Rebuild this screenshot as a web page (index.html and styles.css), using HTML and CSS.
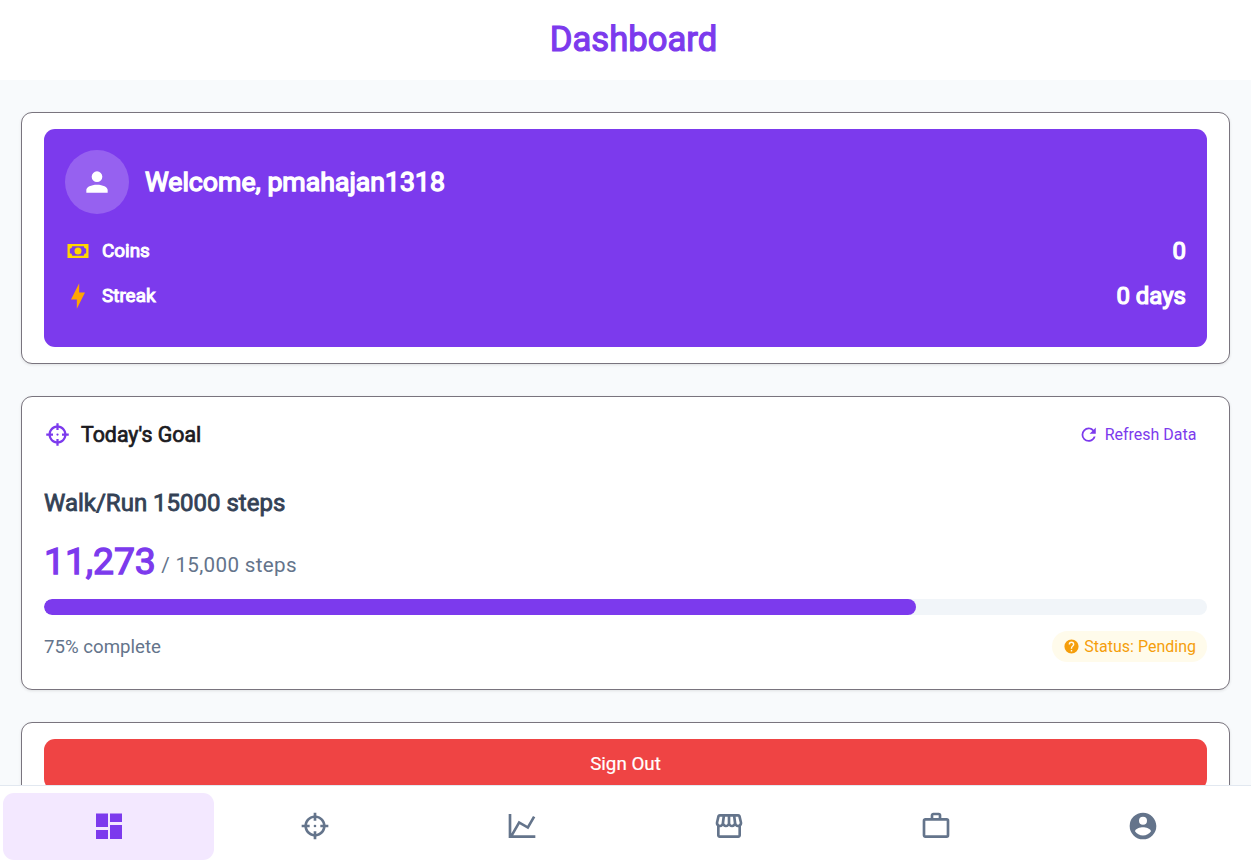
FILE: index.html
```html
<!DOCTYPE html>
<html lang="en">
<head>
<meta charset="utf-8">
<title>Dashboard</title>
<link rel="stylesheet" href="styles.css">
</head>
<body>
<div class="app">
  <header class="topbar"><h1 class="title bold">Dashboard</h1></header>
  <main class="content">
    <section class="card">
      <div class="welcome">
        <div class="user">
          <div class="avatar"><svg width="32" height="32" viewBox="0 0 24 24"><path d="M12,4A4,4 0 0,1 16,8A4,4 0 0,1 12,12A4,4 0 0,1 8,8A4,4 0 0,1 12,4M12,14C16.42,14 20,15.79 20,18V20H4V18C4,15.79 7.58,14 12,14Z"/></svg></div>
          <h2 class="greeting heavy">Welcome, pmahajan1318</h2>
        </div>
        <div class="stat">
          <svg class="coin" width="28" height="28" viewBox="0 0 24 24"><path d="M3,6H21V18H3V6M12,9A3,3 0 0,1 15,12A3,3 0 0,1 12,15A3,3 0 0,1 9,12A3,3 0 0,1 12,9M7,8A2,2 0 0,1 5,10V14A2,2 0 0,1 7,16H17A2,2 0 0,1 19,14V10A2,2 0 0,1 17,8H7Z"/></svg>
          <span class="stat-name heavy">Coins</span><span class="stat-value heavy">0</span>
        </div>
        <div class="stat">
          <svg class="bolt" width="28" height="28" viewBox="0 0 24 24"><path d="M11 15H6L13 1V9H18L11 23V15Z"/></svg>
          <span class="stat-name heavy">Streak</span><span class="stat-value heavy">0 days</span>
        </div>
      </div>
    </section>
    <section class="card">
      <div class="goal-head">
        <svg class="goal-icon" width="27" height="27" viewBox="0 0 24 24"><path d="M11,2V4.07C7.38,4.53 4.53,7.38 4.07,11H2V13H4.07C4.53,16.62 7.38,19.47 11,19.93V22H13V19.93C16.62,19.47 19.47,16.62 19.93,13H22V11H19.93C19.47,7.38 16.62,4.53 13,4.07V2M11,6.08V8H13V6.09C15.5,6.5 17.5,8.5 17.92,11H16V13H17.91C17.5,15.5 15.5,17.5 13,17.92V16H11V17.91C8.5,17.5 6.5,15.5 6.08,13H8V11H6.09C6.5,8.5 8.5,6.5 11,6.08M12,11A1,1 0 0,0 11,12A1,1 0 0,0 12,13A1,1 0 0,0 13,12A1,1 0 0,0 12,11Z"/></svg>
        <h2 class="goal-title bold">Today's Goal</h2>
        <button class="refresh"><svg width="21.33" height="21.33" viewBox="0 0 24 24"><path d="M17.65,6.35C16.2,4.9 14.21,4 12,4A8,8 0 0,0 4,12A8,8 0 0,0 12,20C15.73,20 18.84,17.45 19.73,14H17.65C16.83,16.33 14.61,18 12,18A6,6 0 0,1 6,12A6,6 0 0,1 12,6C13.66,6 15.14,6.69 16.22,7.78L13,11H20V4L17.65,6.35Z"/></svg>Refresh Data</button>
      </div>
      <h3 class="goal-name bold">Walk/Run 15000 steps</h3>
      <div class="count"><span class="count-now bold">11,273</span><span class="count-goal">/ 15,000 steps</span></div>
      <div class="track"><div class="fill" style="width:75%"></div></div>
      <div class="goal-foot">
        <span class="percent">75% complete</span>
        <span class="status"><svg width="17" height="17" viewBox="0 0 24 24"><path d="M15.07,11.25L14.17,12.17C13.45,12.89 13,13.5 13,15H11V14.5C11,13.39 11.45,12.39 12.17,11.67L13.41,10.41C13.78,10.05 14,9.55 14,9C14,7.89 13.1,7 12,7A2,2 0 0,0 10,9H8A4,4 0 0,1 12,5A4,4 0 0,1 16,9C16,9.88 15.64,10.67 15.07,11.25M13,19H11V17H13M12,2A10,10 0 0,0 2,12A10,10 0 0,0 12,22A10,10 0 0,0 22,12C22,6.47 17.5,2 12,2Z"/></svg>Status: Pending</span>
      </div>
    </section>
    <section class="card"><button class="signout">Sign Out</button></section>
  </main>
  <nav class="tabs">
    <a class="tab active"><svg width="32" height="32" viewBox="0 0 32 32"><path d="M3 3.4H15V17H3ZM17 3.4H29V12H17ZM3 20H15V29H3ZM17 15H29V29H17Z"/></svg></a>
    <a class="tab"><svg width="32" height="32" viewBox="0 0 24 24"><path d="M11,2V4.07C7.38,4.53 4.53,7.38 4.07,11H2V13H4.07C4.53,16.62 7.38,19.47 11,19.93V22H13V19.93C16.62,19.47 19.47,16.62 19.93,13H22V11H19.93C19.47,7.38 16.62,4.53 13,4.07V2M11,6.08V8H13V6.09C15.5,6.5 17.5,8.5 17.92,11H16V13H17.91C17.5,15.5 15.5,17.5 13,17.92V16H11V17.91C8.5,17.5 6.5,15.5 6.08,13H8V11H6.09C6.5,8.5 8.5,6.5 11,6.08M12,11A1,1 0 0,0 11,12A1,1 0 0,0 12,13A1,1 0 0,0 13,12A1,1 0 0,0 12,11Z"/></svg></a>
    <a class="tab"><svg width="32" height="32" viewBox="0 0 24 24"><path d="M16,11.78L20.24,4.45L21.97,5.45L16.74,14.5L10.23,10.75L5.46,19H22V21H2V3H4V17.54L9.5,8L16,11.78Z"/></svg></a>
    <a class="tab"><svg width="32" height="32" viewBox="0 0 24 24"><path d="M5.06 3C4.63 3 4.22 3.14 3.84 3.42S3.24 4.06 3.14 4.5L2.11 8.91C1.86 10 2.06 10.92 2.71 11.73L3 12V19C3 19.5 3.2 20 3.61 20.39S4.5 21 5 21H19C19.5 21 20 20.8 20.39 20.39S21 19.5 21 19V12L21.29 11.73C21.94 10.92 22.14 10 21.89 8.91L20.86 4.5C20.73 4.06 20.5 3.7 20.13 3.42C19.78 3.14 19.38 3 18.94 3M18.89 4.97L19.97 9.38C20.06 9.81 19.97 10.2 19.69 10.55C19.44 10.86 19.13 11 18.75 11C18.44 11 18.17 10.9 17.95 10.66C17.73 10.43 17.61 10.16 17.58 9.84L16.97 5M5.06 5H7.03L6.42 9.84C6.3 10.63 5.91 11 5.25 11C4.84 11 4.53 10.86 4.31 10.55C4.03 10.2 3.94 9.81 4.03 9.38M9.05 5H11V9.7C11 10.05 10.89 10.35 10.64 10.62C10.39 10.88 10.08 11 9.7 11C9.36 11 9.07 10.88 8.84 10.59C8.61 10.3 8.5 10 8.5 9.66V9.5M13 5H14.95L15.5 9.5C15.58 9.92 15.5 10.27 15.21 10.57C14.95 10.87 14.61 11 14.2 11C13.89 11 13.61 10.88 13.36 10.62C13.11 10.35 13 10.05 13 9.7M7.45 12.05C8.08 12.65 8.86 13 9.7 13C10.55 13 11.33 12.65 11.97 12.05C12.67 12.65 13.47 13 14.3 13C15.14 13 15.92 12.65 16.55 12.05C17.11 12.65 17.86 12.95 18.7 12.95H19.03V19H5V12.95H5.25C6.09 12.95 6.83 12.65 7.45 12.05Z"/></svg></a>
    <a class="tab"><svg width="32" height="32" viewBox="0 0 24 24"><path d="M10 2H14A2 2 0 0 1 16 4V6H20A2 2 0 0 1 22 8V19A2 2 0 0 1 20 21H4C2.89 21 2 20.1 2 19V8C2 6.89 2.89 6 4 6H8V4C8 2.89 8.89 2 10 2M14 6V4H10V6H14M4 8V19H20V8Z"/></svg></a>
    <a class="tab"><svg width="32" height="32" viewBox="0 0 24 24"><path d="M12,19.2C9.5,19.2 7.29,17.92 6,16C6.03,14 10,12.9 12,12.9C14,12.9 17.97,14 18,16C16.71,17.92 14.5,19.2 12,19.2M12,5A3,3 0 0,1 15,8A3,3 0 0,1 12,11A3,3 0 0,1 9,8A3,3 0 0,1 12,5M12,2A10,10 0 0,0 2,12A10,10 0 0,0 12,22A10,10 0 0,0 22,12C22,6.47 17.5,2 12,2Z"/></svg></a>
  </nav>
</div>
</body>
</html>
```
FILE: styles.css
```css
* { box-sizing: border-box; }
body { margin: 0; font-family: Roboto, "Liberation Sans", sans-serif; font-weight: 400; }
h1, h2, h3 { margin: 0; font-weight: 400; }
button { border: 0; padding: 0; background: none; font: inherit; }
svg { display: block; flex: none; fill: currentColor; }
.bold { -webkit-text-stroke: 0.034em currentColor; }
.heavy { -webkit-text-stroke: 0.052em currentColor; }

.app { display: flex; flex-direction: column; height: 865px; overflow: hidden; background: #f8fafc; }
.topbar { flex: none; height: 80px; padding: 0 0 2px 16px; display: flex; align-items: center; justify-content: center; background: #fff; color: #7c3aed; }
.title { font-size: 34.67px; line-height: 44px; }

.content { flex: 1; min-height: 0; overflow: hidden; padding: 32px 21px 0; display: flex; flex-direction: column; gap: 32px; }
.card { flex: none; padding: 16px 22px; border: 1px solid #79747e; border-radius: 11px; background: #fff; box-shadow: 0 1px 3px rgba(0, 0, 0, 0.1); }

.welcome { height: 218px; padding: 21px; border-radius: 11px; background: #7c3aed; color: #fff; }
.user { display: flex; align-items: center; gap: 16px; margin-bottom: 14px; }
.avatar { width: 64px; height: 64px; border-radius: 50%; display: flex; align-items: center; justify-content: center; background: rgba(255, 255, 255, 0.2); }
.greeting { font-size: 26.67px; line-height: 36px; }
.stat { display: flex; align-items: center; height: 45px; margin-left: -1px; }
.stat-name { margin-left: 10px; font-size: 18.9px; }
.stat-value { margin-left: auto; font-size: 24px; }
.coin { color: #ffd700; }
.bolt { color: #ffa500; }

.goal-head { display: flex; align-items: center; height: 43px; }
.goal-icon { color: #7c3aed; }
.goal-title { margin-left: 10px; font-size: 21.33px; color: #1c1b1f; }
.refresh { margin-left: auto; padding-right: 10.5px; display: flex; align-items: center; gap: 5px; font-size: 16px; color: #7c3aed; }
.goal-name { margin-top: 31px; font-size: 24px; line-height: 32px; color: #334155; }
.count { margin-top: 17px; height: 50px; display: flex; align-items: flex-end; gap: 5.5px; }
.count-now { font-size: 37.33px; line-height: 50px; color: #7c3aed; letter-spacing: -0.1px; }
.count-goal { font-size: 20.6px; line-height: 42px; letter-spacing: 0.33px; color: #64748b; }
.track { margin-top: 13px; height: 16px; border-radius: 8px; overflow: hidden; background: #f1f5f9; }
.fill { height: 100%; border-radius: 8px; background: #7c3aed; }
.goal-foot { margin: 16px 0 11px; display: flex; align-items: center; justify-content: space-between; }
.percent { font-size: 18.67px; color: #64748b; }
.status { height: 31px; padding: 0 11px; display: flex; align-items: center; gap: 4.5px; border-radius: 16px; background: #fffbeb; color: #f59e0b; font-size: 16px; }

.signout { display: block; width: 100%; height: 51px; padding-bottom: 1px; border-radius: 11px; background: #ef4444; color: #fff; font-size: 18.8px; -webkit-text-stroke: 0.2px #fff; }

.tabs { flex: none; height: 80px; padding: 6.5px 5px 5.5px; display: flex; border-top: 1px solid #e2e8f0; background: #fff; }
.tab { flex: 1; display: flex; align-items: center; justify-content: center; color: #64748b; }
.tab svg { margin-top: -1px; }
.tab.active { margin: 0 -2px; flex: 0 0 211px; border-radius: 11px; background: #f3e8ff; color: #7c3aed; }
```
